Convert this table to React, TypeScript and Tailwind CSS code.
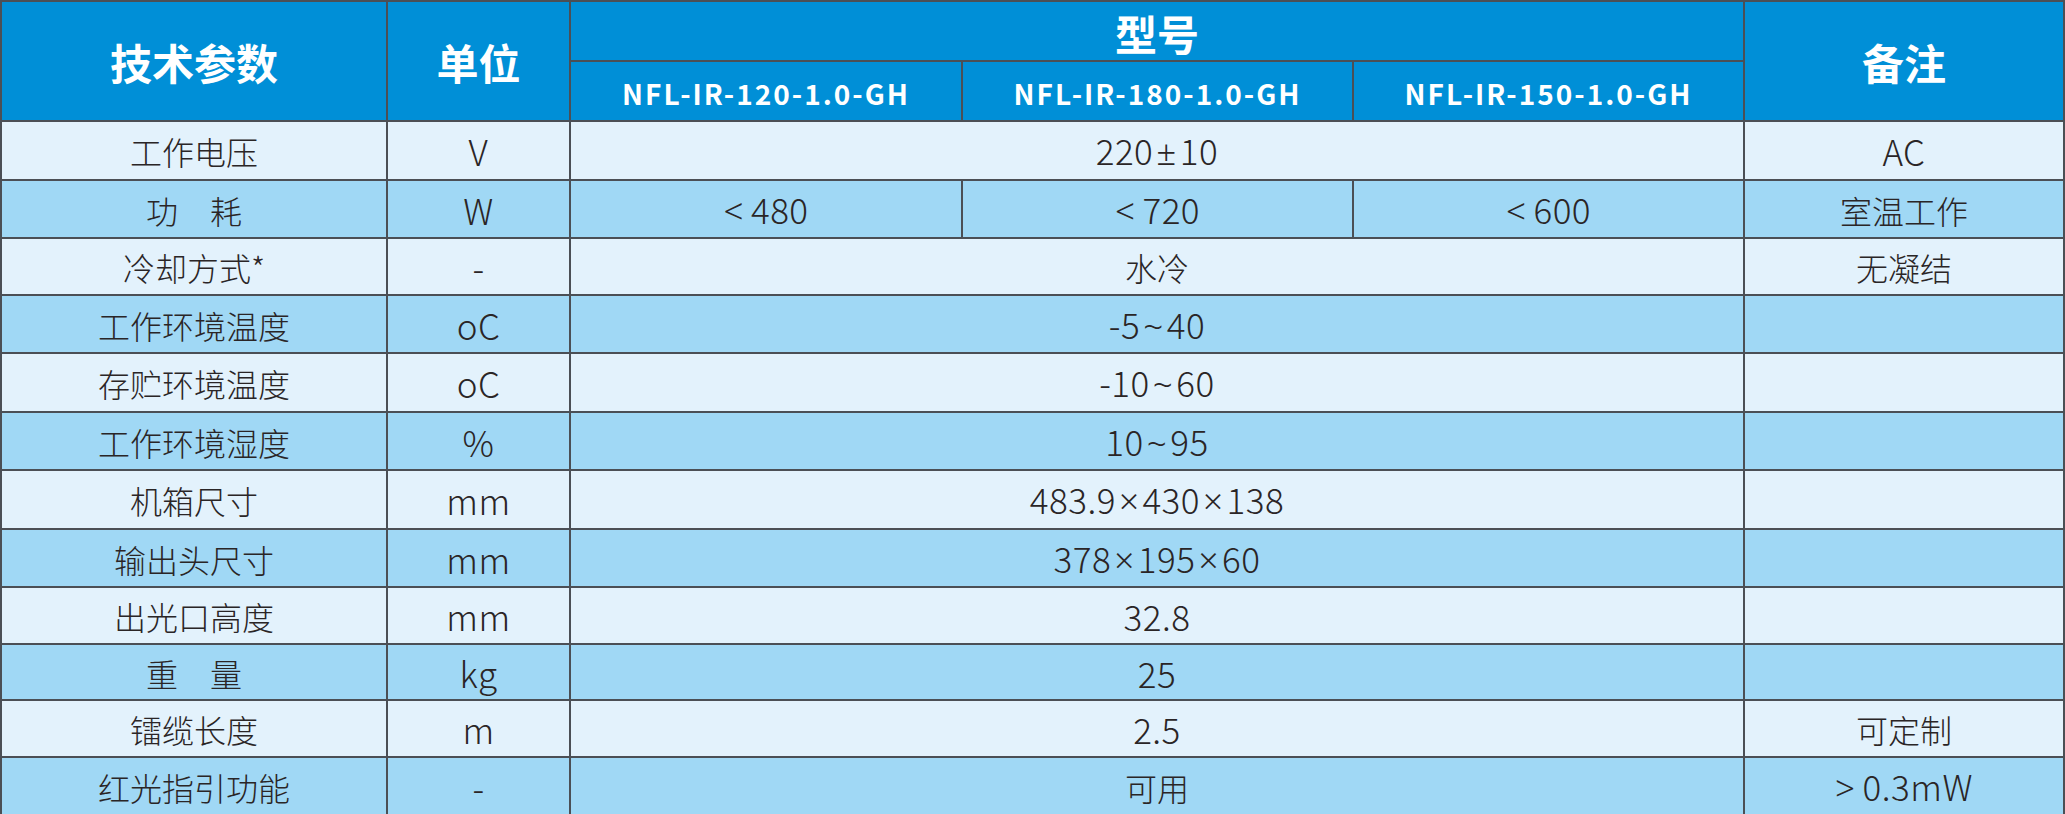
const font = {
  fontFamily: '"Noto Sans CJK SC", "Noto Sans", sans-serif',
};

type Row = {
  name: string;
  unit: string;
  values: string[];
  note?: string;
};

const rows: Row[] = [
  { name: "工作电压", unit: "V", values: ["220±10"], note: "AC" },
  { name: "功　耗", unit: "W", values: ["<480", "<720", "<600"], note: "室温工作" },
  { name: "冷却方式*", unit: "-", values: ["水冷"], note: "无凝结" },
  { name: "工作环境温度", unit: "oC", values: ["-5~40"] },
  { name: "存贮环境温度", unit: "oC", values: ["-10~60"] },
  { name: "工作环境湿度", unit: "%", values: ["10~95"] },
  { name: "机箱尺寸", unit: "mm", values: ["483.9×430×138"] },
  { name: "输出头尺寸", unit: "mm", values: ["378×195×60"] },
  { name: "出光口高度", unit: "mm", values: ["32.8"] },
  { name: "重　量", unit: "kg", values: ["25"] },
  { name: "镭缆长度", unit: "m", values: ["2.5"], note: "可定制" },
  { name: "红光指引功能", unit: "-", values: ["可用"], note: ">0.3mW" },
];

const models = ["NFL-IR-120-1.0-GH", "NFL-IR-180-1.0-GH", "NFL-IR-150-1.0-GH"];

const hasCjk = (s: string) => /[\u3000-\u9fff]/.test(s);

// signs come from a latin face so they stay narrow like the print
function Value({ text }: { text: string }) {
  if (hasCjk(text)) return <span className="text-[32px]">{text}</span>;
  const parts = text.split(/([±×<>~])/);
  return (
    <span className="text-[35px] tracking-[0.5px]">
      {parts.map((p, i) =>
        /^[±×<>~]$/.test(p) ? (
          <span
            key={i}
            className={`font-light ${p === "<" || p === ">" ? "mr-[7px]" : "mx-[3px]"}`}
            style={{ fontFamily: '"Noto Sans", sans-serif' }}
          >
            {p}
          </span>
        ) : (
          <span key={i}>{p}</span>
        )
      )}
    </span>
  );
}

export default function App() {
  const head = "bg-[#008fd7] text-white font-bold flex items-center justify-center";
  return (
    <div style={font} className="w-[2065px] h-[814px] bg-white">
      <div className="grid h-[814px] w-[2065px] grid-cols-[384px_181px_390px_389px_389px_318px] grid-rows-[58px_58px_repeat(12,1fr)] gap-[2px] bg-[#4b4f55] p-[2px]">
        <div className={`${head} row-span-2 text-[42px]`}>技术参数</div>
        <div className={`${head} row-span-2 text-[42px]`}>单位</div>
        <div className={`${head} col-span-3 text-[42px] pt-[2px]`}>型号</div>
        <div className={`${head} row-span-2 text-[42px]`}>备注</div>
        {models.map((m) => (
          <div key={m} className={`${head} text-[28px] tracking-[2px] pt-[4px]`}>
            {m}
          </div>
        ))}

        {rows.map((r, i) => {
          const bg = i % 2 === 0 ? "bg-[#e3f2fc]" : "bg-[#a0d8f5]";
          const cell = `${bg} flex items-center justify-center text-[#2a2526] font-light pt-[2px]`;
          return [
            <div key={`n${i}`} className={cell}>
              <Value text={r.name} />
            </div>,
            <div key={`u${i}`} className={cell}>
              <Value text={r.unit} />
            </div>,
            ...(r.values.length === 1
              ? [
                  <div key={`v${i}`} className={`${cell} col-span-3`}>
                    <Value text={r.values[0]} />
                  </div>,
                ]
              : r.values.map((v, j) => (
                  <div key={`v${i}-${j}`} className={cell}>
                    <Value text={v} />
                  </div>
                ))),
            <div key={`r${i}`} className={cell}>
              {r.note ? <Value text={r.note} /> : null}
            </div>,
          ];
        })}
      </div>
    </div>
  );
}
